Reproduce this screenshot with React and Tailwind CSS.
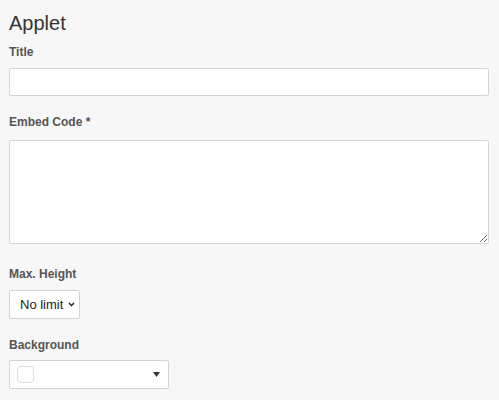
export default function App() {
  return (
    <div className="min-h-[400px] bg-[#f7f7f7] px-[9px] pt-[11px] font-['Liberation_Sans',Arial,sans-serif] text-[#333]">
      <h1 className="text-[20px] leading-[24px] font-normal">Applet</h1>

      <label className="mt-[9px] mb-[8px] block text-[12px] leading-[16px] font-bold text-[#555]">Title</label>
      <input
        type="text"
        className="block h-[28px] w-[480px] rounded-[2px] border border-[#d3d3d3] bg-white px-2 text-[14px] outline-none"
      />

      <label className="mt-[18px] mb-[10px] block text-[12px] leading-[16px] font-bold text-[#555]">Embed Code *</label>
      <textarea className="block h-[104px] w-[480px] rounded-[2px] border border-[#d3d3d3] bg-white px-2 py-1 text-[14px] outline-none" />

      <label className="mt-[22px] mb-[8px] block text-[12px] leading-[16px] font-bold text-[#555]">Max. Height</label>
      <div className="relative h-[29px] w-[71px]">
        <select className="h-full w-full appearance-none rounded-[2px] border border-[#d3d3d3] bg-white pl-[10px] font-['Liberation_Sans',Arial,sans-serif] text-[13px] text-[#222] outline-none">
          <option>No limit</option>
        </select>
        <svg className="pointer-events-none absolute right-[5px] top-[12px]" width="7" height="5" viewBox="0 0 8 6">
          <path d="M1 1.2 L4 4.2 L7 1.2" fill="none" stroke="#222" strokeWidth="1.7" />
        </svg>
      </div>

      <label className="mt-[18px] mb-[7px] block text-[12px] leading-[16px] font-bold text-[#555]">Background</label>
      <div className="flex h-[29px] w-[160px] items-center justify-between rounded-[2px] border border-[#d3d3d3] bg-white pl-[7px] pr-[8px]">
        <span className="h-[17px] w-[17px] rounded-[4px] border border-[#dcdcdc] bg-white" />
        <svg width="7" height="5" viewBox="0 0 7 5">
          <path d="M0 0 H7 L3.5 5 Z" fill="#333" />
        </svg>
      </div>
    </div>
  );
}
